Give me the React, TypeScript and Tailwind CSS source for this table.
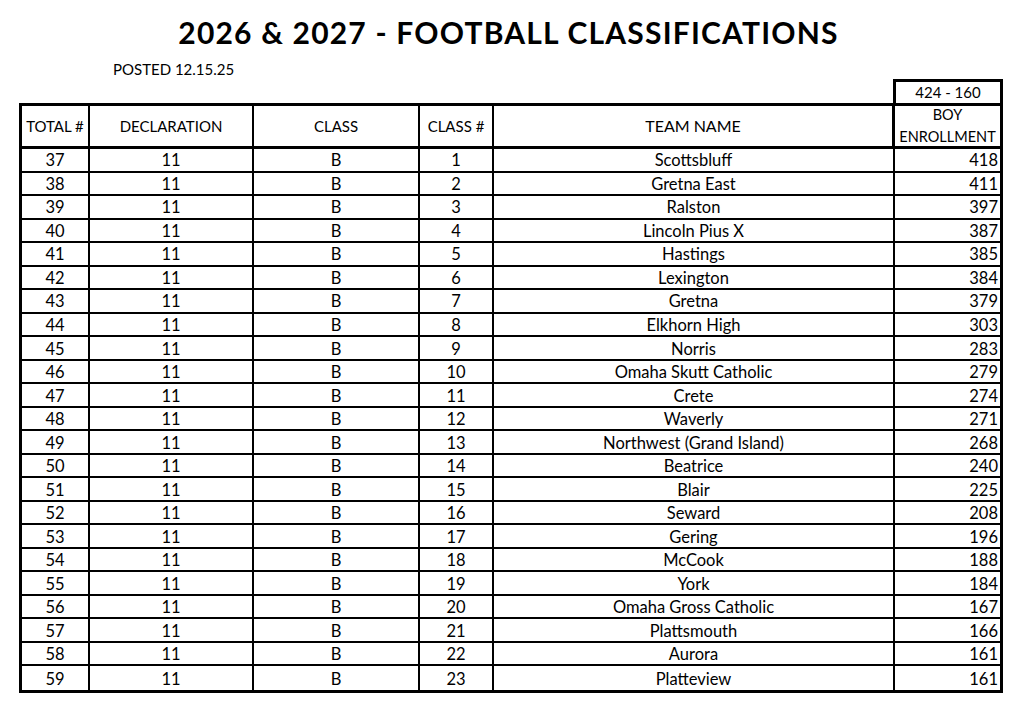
// Football classifications sheet (class B list)

const teams: [string, number][] = [
  ['Scottsbluff', 418],
  ['Gretna East', 411],
  ['Ralston', 397],
  ['Lincoln Pius X', 387],
  ['Hastings', 385],
  ['Lexington', 384],
  ['Gretna', 379],
  ['Elkhorn High', 303],
  ['Norris', 283],
  ['Omaha Skutt Catholic', 279],
  ['Crete', 274],
  ['Waverly', 271],
  ['Northwest (Grand Island)', 268],
  ['Beatrice', 240],
  ['Blair', 225],
  ['Seward', 208],
  ['Gering', 196],
  ['McCook', 188],
  ['York', 184],
  ['Omaha Gross Catholic', 167],
  ['Plattsmouth', 166],
  ['Aurora', 161],
  ['Platteview', 161],
];

export default function App() {
  return (
    <div className="w-[1024px] h-[711px] bg-white text-black font-['Lato','Liberation_Sans',sans-serif]">
      {/* タイトル */}
      <h1 className="pt-[15px] pr-[7px] text-center text-[30px] leading-[34px] font-bold tracking-[1.2px]">
        2026 &amp; 2027 - FOOTBALL CLASSIFICATIONS
      </h1>
      <p className="mt-[11px] pl-[113px] text-[15px] leading-[18px]">POSTED 12.15.25</p>

      {/* 人数レンジ */}
      <div className="mt-[1px] flex justify-end pr-[21px]">
        <div className="w-[110px] h-[24px] border-[3px] border-b-0 border-black flex items-center justify-center text-[15px] leading-none">
          424 - 160
        </div>
      </div>

      {/* 表 */}
      <div className="ml-[19px] w-[984px] border-[3px] border-black text-[16.5px]">
        <div className="flex h-[43px] border-b-[3px] border-black text-[15px]">
          <div className="w-[68px] border-r-2 border-black flex items-center justify-center">TOTAL #</div>
          <div className="w-[164px] border-r-2 border-black flex items-center justify-center">DECLARATION</div>
          <div className="w-[166px] border-r-2 border-black flex items-center justify-center">CLASS</div>
          <div className="w-[74px] border-r-2 border-black flex items-center justify-center">CLASS #</div>
          <div className="w-[401px] border-r-[3px] border-black flex items-center justify-center text-[16px]">TEAM NAME</div>
          <div className="flex-1 flex flex-col items-center justify-center leading-[22px] text-[14.5px]">
            <span>BOY</span>
            <span>ENROLLMENT</span>
          </div>
        </div>

        {teams.map(([name, boys], i) => (
          <div
            key={name}
            className={`flex h-[23.52px] border-black ${i < teams.length - 1 ? 'border-b-2' : ''}`}
          >
            <div className="w-[68px] border-r-2 border-black pt-[2px] flex items-center justify-center">{37 + i}</div>
            <div className="w-[164px] border-r-2 border-black pt-[2px] flex items-center justify-center">11</div>
            <div className="w-[166px] border-r-2 border-black pt-[2px] flex items-center justify-center">B</div>
            <div className="w-[74px] border-r-2 border-black pt-[2px] flex items-center justify-center">{i + 1}</div>
            <div className="w-[401px] border-r-2 border-black pt-[2px] flex items-center justify-center">{name}</div>
            <div className="flex-1 pt-[2px] flex items-center justify-end pr-[2px]">{boys}</div>
          </div>
        ))}
      </div>
    </div>
  );
}
